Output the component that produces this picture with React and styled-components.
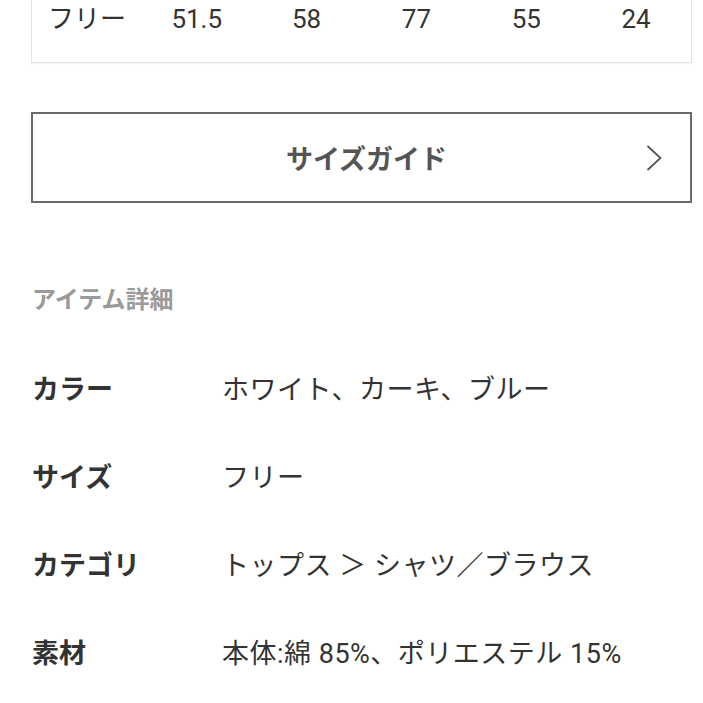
import React from "react";
import styled, { createGlobalStyle } from "styled-components";

const Global = createGlobalStyle`
  html, body { margin: 0; padding: 0; background: #fff; }
  body {
    font-family: Roboto, "Noto Sans CJK JP", sans-serif;
    color: #333;
    -webkit-font-smoothing: antialiased;
  }
`;

const Page = styled.div`
  width: 661px;
  margin: 0 0 0 31px;
  overflow: hidden;
  height: 703px;
`;

const SizeTable = styled.div`
  display: grid;
  grid-template-columns: repeat(6, 1fr);
  padding-bottom: 24px;
  border: 1px solid #e2e2e2;
  border-top: none;
  box-shadow: 0 1px 2px rgba(0, 0, 0, 0.05);
`;

const Cell = styled.div`
  text-align: center;
  font-size: 26px;
  line-height: 38px;
  color: #333;
`;

const GuideButton = styled.button`
  box-sizing: border-box;
  width: 661px;
  height: 91px;
  margin-top: 49px;
  display: grid;
  grid-template-columns: 1fr auto 1fr;
  align-items: center;
  background: #fff;
  border: 2px solid #6a6a6a;
  padding: 0 28px 0 38px;
  font-family: Roboto, "Noto Sans CJK JP", sans-serif;
  font-size: 27px;
  font-weight: 700;
  color: #555;
  cursor: pointer;
`;

const GuideLabel = styled.span`
  grid-column: 2;
`;

const Chevron = styled.svg`
  grid-column: 3;
  justify-self: end;
  display: block;
`;

const SectionTitle = styled.h2`
  margin: 81px 0 0 1px;
  font-size: 24px;
  line-height: 32px;
  font-weight: 700;
  color: #9a9a9a;
`;

const DetailList = styled.dl`
  margin: 30px 0 0 1px;
  display: grid;
  grid-template-columns: 190px 1fr;
  grid-auto-rows: 88px;
  align-items: center;
`;

const Term = styled.dt`
  font-size: 27px;
  font-weight: 700;
  color: #333;
  line-height: 40px;
`;

const Desc = styled.dd`
  margin: 0;
  font-size: 27px;
  letter-spacing: 0.5px;
  color: #333;
  line-height: 40px;
  white-space: nowrap;
`;

const sizes = ["フリー", "51.5", "58", "77", "55", "24"];
const details = [
  ["カラー", "ホワイト、カーキ、ブルー"],
  ["サイズ", "フリー"],
  ["カテゴリ", "トップス ＞ シャツ／ブラウス"],
  ["素材", "本体:綿 85%、ポリエステル 15%"],
];

export default function App() {
  return (
    <>
      <Global />
      <Page>
        <SizeTable>
          {sizes.map((s) => (
            <Cell key={s}>{s}</Cell>
          ))}
        </SizeTable>
        <GuideButton>
          <GuideLabel>サイズガイド</GuideLabel>
          <Chevron width="16" height="26" viewBox="0 0 16 26" fill="none">
            <polyline points="1.5,1 14.5,13 1.5,25" stroke="#555" strokeWidth="1.8" />
          </Chevron>
        </GuideButton>
        <SectionTitle>アイテム詳細</SectionTitle>
        <DetailList>
          {details.map(([k, v]) => (
            <React.Fragment key={k}>
              <Term>{k}</Term>
              <Desc>{v}</Desc>
            </React.Fragment>
          ))}
        </DetailList>
      </Page>
    </>
  );
}
